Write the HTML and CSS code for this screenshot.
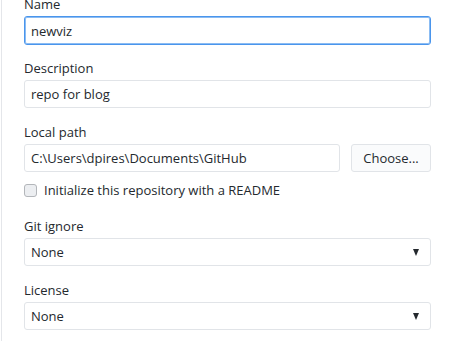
FILE: index.html
```html
<!DOCTYPE html>
<html lang="en">
<head>
  <meta charset="UTF-8">
  <title>Create a new repository</title>
  <link rel="stylesheet" href="styles.css">
</head>
<body>
  <div id="dialog">
    <div class="field first">
      <label for="name">Name</label>
      <input id="name" class="text-box focused" type="text" value="newviz">
    </div>

    <div class="field">
      <label for="desc">Description</label>
      <input id="desc" class="text-box" type="text" value="repo for blog">
    </div>

    <div class="field">
      <label for="path">Local path</label>
      <div class="path-row">
        <input id="path" class="text-box" type="text" value="C:\Users\dpires\Documents\GitHub">
        <button class="choose-btn">Choose...</button>
      </div>
    </div>

    <label class="check-row">
      <input type="checkbox" class="check">
      Initialize this repository with a README
    </label>

    <div class="field">
      <label>Git ignore</label>
      <div class="select-box">None <span class="arrow"></span></div>
    </div>

    <div class="field">
      <label>License</label>
      <div class="select-box">None <span class="arrow"></span></div>
    </div>
  </div>
</body>
</html>
```

FILE: styles.css
```css
* {
  box-sizing: border-box;
  margin: 0;
  padding: 0;
}

body {
  background-color: #ffffff;
  color: #24292e;
  font-family: 'Open Sans', 'Noto Sans', sans-serif;
  font-size: 13px;
  height: 341px;
  overflow: hidden;
}

#dialog {
  margin-left: 1px;
  margin-top: -4px;
  border-left: 1px solid #e4e6ea;
  padding: 0 23px 0 22px;
  height: 345px;
}

.field {
  margin-bottom: 16px;
}

.field.first {
  margin-bottom: 15px;
}

.field label {
  display: block;
  line-height: 17px;
  margin-bottom: 3px;
}

.text-box,
.select-box,
.choose-btn {
  height: 28px;
  border: 1px solid #e1e4e8;
  border-radius: 3px;
  background-color: #fff;
  color: #24292e;
  font-family: inherit;
  font-size: 13px;
  outline: none;
}

.text-box {
  width: 100%;
  padding: 0 6px;
}

.text-box.focused {
  border-color: #4a95ec;
  box-shadow: inset 0 0 0 1px #8bbcf3;
  height: 29px;
}

.path-row {
  display: flex;
  gap: 11px;
}

.choose-btn {
  flex: 0 0 80px;
  background-color: #fafbfc;
  cursor: pointer;
}

.check-row {
  display: flex;
  align-items: center;
  gap: 7px;
  height: 20px;
  margin: -8px 0 18px;
}

.check {
  appearance: none;
  width: 13px;
  height: 13px;
  border: 1px solid #b3b6ba;
  border-radius: 3px;
  background-color: #eceef1;
}

.select-box {
  display: flex;
  align-items: center;
  justify-content: space-between;
  padding: 0 11px 0 6px;
}

.arrow {
  width: 0;
  height: 0;
  border-left: 3.5px solid transparent;
  border-right: 3.5px solid transparent;
  border-top: 7px solid #24292e;
}
```
